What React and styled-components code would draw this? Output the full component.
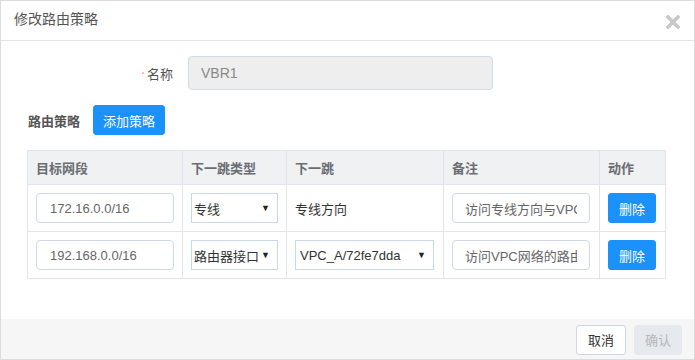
import styled, { createGlobalStyle } from 'styled-components';

const Global = createGlobalStyle`
  html, body { margin: 0; padding: 0; background: #fff; }
  body { font-family: "Liberation Sans", "Noto Sans CJK SC", sans-serif; font-size: 13px; color: #555; }
  * { box-sizing: border-box; }
`;

// janela do dialogo inteira
const Dialog = styled.div`
  width: 695px;
  height: 360px;
  border: 1px solid #dcdcdc;
  display: flex;
  flex-direction: column;
  background: #fff;
`;

const Header = styled.div`
  height: 40px;
  flex: none;
  border-bottom: 1px solid #e1e4e8;
  padding: 0 14px 0 13px;
  display: flex;
  align-items: center;
  justify-content: space-between;
`;

const Title = styled.div`
  font-size: 14px;
  color: #555;
  margin-top: -5px;
`;

const Close = styled.div`
  width: 14px;
  height: 14px;
  margin-top: 2px;
  display: flex;
`;

const Body = styled.div`
  flex: 1;
  padding: 15px 28px 0 26px;
`;

const FormRow = styled.div`
  display: flex;
  align-items: center;
`;

const Label = styled.div`
  width: 146px;
  margin-right: 15px;
  display: flex;
  justify-content: flex-end;
  align-items: center;
  color: #555;
`;

const Required = styled.span`
  width: 2px;
  height: 2px;
  border-radius: 1px;
  background: #f3a6a6;
  margin-right: 3px;
`;

const NameInput = styled.input`
  width: 305px;
  height: 34px;
  border: 1px solid #d3dce6;
  border-radius: 4px;
  background: #eeeeee;
  padding: 0 12px;
  font: inherit;
  font-size: 14px;
  color: #888;
  outline: none;
`;

const PolicyRow = styled.div`
  display: flex;
  align-items: center;
  margin-top: 15px;
  gap: 13px;
  padding-left: 1px;
`;

const SectionTitle = styled.div`
  font-weight: bold;
  color: #555;
  width: 52px;
`;

const Button = styled.button`
  height: 30px;
  width: ${p => p.$w || 48}px;
  padding: 0;
  border-radius: 3px;
  font: inherit;
  font-size: 13px;
  cursor: pointer;
  border: 1px solid ${p => p.$variant === 'primary' ? '#1a91fb' : p.$variant === 'disabled' ? '#e6e9ed' : '#c9d7e8'};
  background: ${p => p.$variant === 'primary' ? '#1a91fb' : p.$variant === 'disabled' ? '#e6e9ed' : '#fff'};
  color: ${p => p.$variant === 'primary' ? '#fff' : p.$variant === 'disabled' ? '#b4b8bd' : '#333'};
`;

const Table = styled.table`
  margin-top: 15px;
  width: 638px;
  border-collapse: collapse;
  table-layout: fixed;
  th, td {
    border: 1px solid #e1e5eb;
    text-align: left;
    padding: 0 8px;
  }
  th {
    height: 34px;
    background: #f0f1f3;
    color: #6a6d72;
    font-weight: bold;
  }
  td {
    height: 47px;
    color: #333;
  }
`;

const CellInput = styled.input`
  width: 138px;
  height: 30px;
  border: 1px solid #cfd9e5;
  border-radius: 4px;
  padding: 0 ${p => p.$pad || 13}px;
  font: inherit;
  font-size: 13px;
  color: #666;
  outline: none;
  background: #fff;
  display: block;
`;

const Select = styled.div`
  width: ${p => p.$w}px;
  height: 30px;
  border: 1px solid #c9d6e6;
  padding: 0 7px 0 ${p => p.$pad || 2}px;
  display: flex;
  align-items: center;
  justify-content: space-between;
  color: #333;
  background: #fff;
  white-space: nowrap;
`;

const Arrow = styled.span`
  font-size: 9px;
  color: #222;
`;

const Footer = styled.div`
  height: 40px;
  flex: none;
  background: #f6f6f6;
  display: flex;
  justify-content: flex-end;
  align-items: center;
  gap: 8px;
  padding: 1px 12px 0 0;
`;

const rows = [
  { net: '172.16.0.0/16', type: '专线', next: '专线方向', select: false, note: '访问专线方向与VPC互通' },
  { net: '192.168.0.0/16', type: '路由器接口', next: 'VPC_A/72fe7dda', select: true, note: '访问VPC网络的路由规则' },
];

function App() {
  return (
    <>
      <Global />
      <Dialog>
        <Header>
          <Title>修改路由策略</Title>
          <Close>
            <svg width="14" height="14" viewBox="0 0 14 14">
              <path d="M2 2 L12 12 M12 2 L2 12" stroke="#c8c8c8" strokeWidth="3.6" strokeLinecap="square" />
            </svg>
          </Close>
        </Header>
        <Body>
          <FormRow>
            <Label><Required />名称</Label>
            <NameInput value="VBR1" readOnly />
          </FormRow>
          <PolicyRow>
            <SectionTitle>路由策略</SectionTitle>
            <Button $variant="primary" $w={72}>添加策略</Button>
          </PolicyRow>
          <Table>
            <colgroup>
              <col style={{ width: 155 }} />
              <col style={{ width: 104 }} />
              <col style={{ width: 157 }} />
              <col style={{ width: 156 }} />
              <col style={{ width: 66 }} />
            </colgroup>
            <thead>
              <tr>
                <th>目标网段</th>
                <th>下一跳类型</th>
                <th>下一跳</th>
                <th>备注</th>
                <th>动作</th>
              </tr>
            </thead>
            <tbody>
              {rows.map(r => (
                <tr key={r.net}>
                  <td><CellInput value={r.net} readOnly /></td>
                  <td><Select $w={87}>{r.type}<Arrow>▼</Arrow></Select></td>
                  <td>
                    {r.select
                      ? <Select $w={139} $pad={4}>{r.next}<Arrow>▼</Arrow></Select>
                      : r.next}
                  </td>
                  <td><CellInput value={r.note} readOnly $pad={12} /></td>
                  <td><Button $variant="primary">删除</Button></td>
                </tr>
              ))}
            </tbody>
          </Table>
        </Body>
        <Footer>
          <Button $w={50}>取消</Button>
          <Button $variant="disabled">确认</Button>
        </Footer>
      </Dialog>
    </>
  );
}

export default App;
